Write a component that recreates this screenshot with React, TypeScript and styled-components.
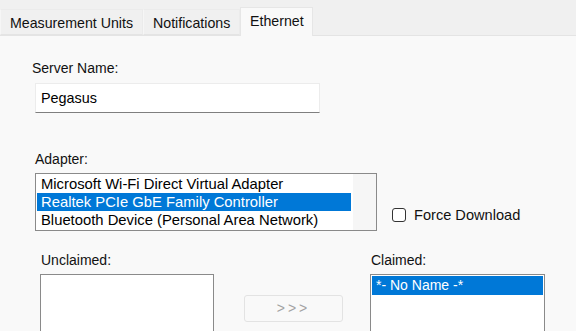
import React from 'react';
import styled, {createGlobalStyle} from 'styled-components';

const GlobalStyle = createGlobalStyle`
    html, body {
        margin: 0;
        padding: 0;
        background: #f9f9f9;
    }
    body {
        font-family: "Liberation Sans", Arial, sans-serif;
        font-size: 14px;
        color: #111;
    }
`;

const Page = styled.div`
    width: 576px;
    height: 331px;
    overflow: hidden;
    background: #f9f9f9;
    display: flex;
    flex-direction: column;
`;

const TabBar = styled.div`
    height: 36px;
    flex: none;
    display: flex;
    align-items: flex-end;
    background: #f0f0f0;
    border-bottom: 1px solid #e4e4e4;
    box-sizing: border-box;
`;

const Tab = styled.div<{w: number; active?: boolean}>`
    width: ${({w}) => w}px;
    box-sizing: border-box;
    padding-left: 9px;
    height: ${({active}) => (active ? 29 : 26)}px;
    line-height: 26px;
    margin-bottom: ${({active}) => (active ? -1 : 0)}px;
    background: ${({active}) => (active ? '#f9f9f9' : '#f0f0f0')};
    border: 1px solid ${({active}) => (active ? '#e6e6e6' : '#ebebeb')};
    border-bottom: ${({active}) => (active ? 'none' : '1px solid #e4e4e4')};
    border-left-color: ${({active}) => (active ? '#e6e6e6' : '#f6f6f6')};
    white-space: nowrap;
    font-size: 14.2px;
    color: #111;
`;

const Content = styled.div`
    padding: 24px 0 0 32px;
    display: flex;
    flex-direction: column;
    align-items: flex-start;
`;

const Label = styled.div<{indent?: number}>`
    line-height: 17px;
    margin-left: ${({indent}) => indent ?? 0}px;
    color: #111;
`;

const TextBox = styled.div`
    margin: 6px 0 0 3px;
    width: 285px;
    height: 30px;
    box-sizing: border-box;
    background: #fff;
    border: 1px solid #ececec;
    border-bottom: 1px solid #7f7f7f;
    padding-left: 5px;
    line-height: 28px;
    font-size: 14.4px;
    color: #000;
`;

const AdapterSection = styled.div`
    margin: 38px 0 0 3px;
    display: flex;
    flex-direction: column;
`;

const AdapterRow = styled.div`
    margin-top: 5px;
    display: flex;
    align-items: flex-end;
    gap: 15px;
`;

const ListBox = styled.div<{w: number; h: number; gutter?: number}>`
    width: ${({w}) => w}px;
    height: ${({h}) => h}px;
    box-sizing: border-box;
    background: #fff;
    border: 1px solid #8a8a8a;
    padding: 1px ${({gutter}) => gutter ?? 1}px 0 1px;
    display: flex;
    flex-direction: column;
    position: relative;
    overflow: hidden;
`;

const ScrollGutter = styled.div`
    position: absolute;
    top: 0;
    right: 0;
    bottom: 0;
    width: 23px;
    background: #f6f6f6;
`;

const Row = styled.div<{selected?: boolean; h?: number; size?: number}>`
    height: ${({h}) => h ?? 18}px;
    line-height: ${({h}) => h ?? 18}px;
    padding-left: 4px;
    white-space: nowrap;
    font-size: ${({size}) => size ?? 14.8}px;
    background: ${({selected}) => (selected ? '#0078d7' : 'transparent')};
    color: ${({selected}) => (selected ? '#fff' : '#000')};
`;

const CheckRow = styled.label`
    display: flex;
    align-items: center;
    gap: 8px;
    margin-bottom: 8px;
    font-size: 14.6px;
    color: #111;
`;

const CheckBox = styled.span`
    width: 14px;
    height: 14px;
    box-sizing: border-box;
    border: 1px solid #333;
    border-radius: 3px;
    background: #fff;
`;

const BottomRow = styled.div`
    margin: 21px 0 0 8px;
    display: flex;
    align-items: flex-start;
`;

const Column = styled.div`
    display: flex;
    flex-direction: column;
`;

const ListGap = styled.div`
    margin-top: 5px;
`;

const MoveButton = styled.div`
    margin: 43px 27px 0 30px;
    width: 99px;
    height: 27px;
    box-sizing: border-box;
    border: 1px solid #e3e3e3;
    border-radius: 3px;
    background: #f9f9f9;
    color: #a3a3a3;
    text-align: center;
    line-height: 25px;
    letter-spacing: 3px;
`;

export default function App() {
    return (
        <Page>
            <GlobalStyle />
            <TabBar>
                <Tab w={143}>Measurement Units</Tab>
                <Tab w={97}>Notifications</Tab>
                <Tab w={73} active>Ethernet</Tab>
            </TabBar>
            <Content>
                <Label>Server Name:</Label>
                <TextBox>Pegasus</TextBox>
                <AdapterSection>
                    <Label>Adapter:</Label>
                    <AdapterRow>
                        <ListBox w={342} h={58} gutter={25}>
                            <ScrollGutter />
                            <Row>Microsoft Wi-Fi Direct Virtual Adapter</Row>
                            <Row selected>Realtek PCIe GbE Family Controller</Row>
                            <Row>Bluetooth Device (Personal Area Network)</Row>
                        </ListBox>
                        <CheckRow>
                            <CheckBox />
                            Force Download
                        </CheckRow>
                    </AdapterRow>
                </AdapterSection>
                <BottomRow>
                    <Column>
                        <Label indent={1}>Unclaimed:</Label>
                        <ListGap>
                            <ListBox w={174} h={80} />
                        </ListGap>
                    </Column>
                    <MoveButton>&gt;&gt;&gt;</MoveButton>
                    <Column>
                        <Label indent={1}>Claimed:</Label>
                        <ListGap>
                            <ListBox w={175} h={80}>
                                <Row selected h={19} size={14}>*- No Name -*</Row>
                            </ListBox>
                        </ListGap>
                    </Column>
                </BottomRow>
            </Content>
        </Page>
    );
}
